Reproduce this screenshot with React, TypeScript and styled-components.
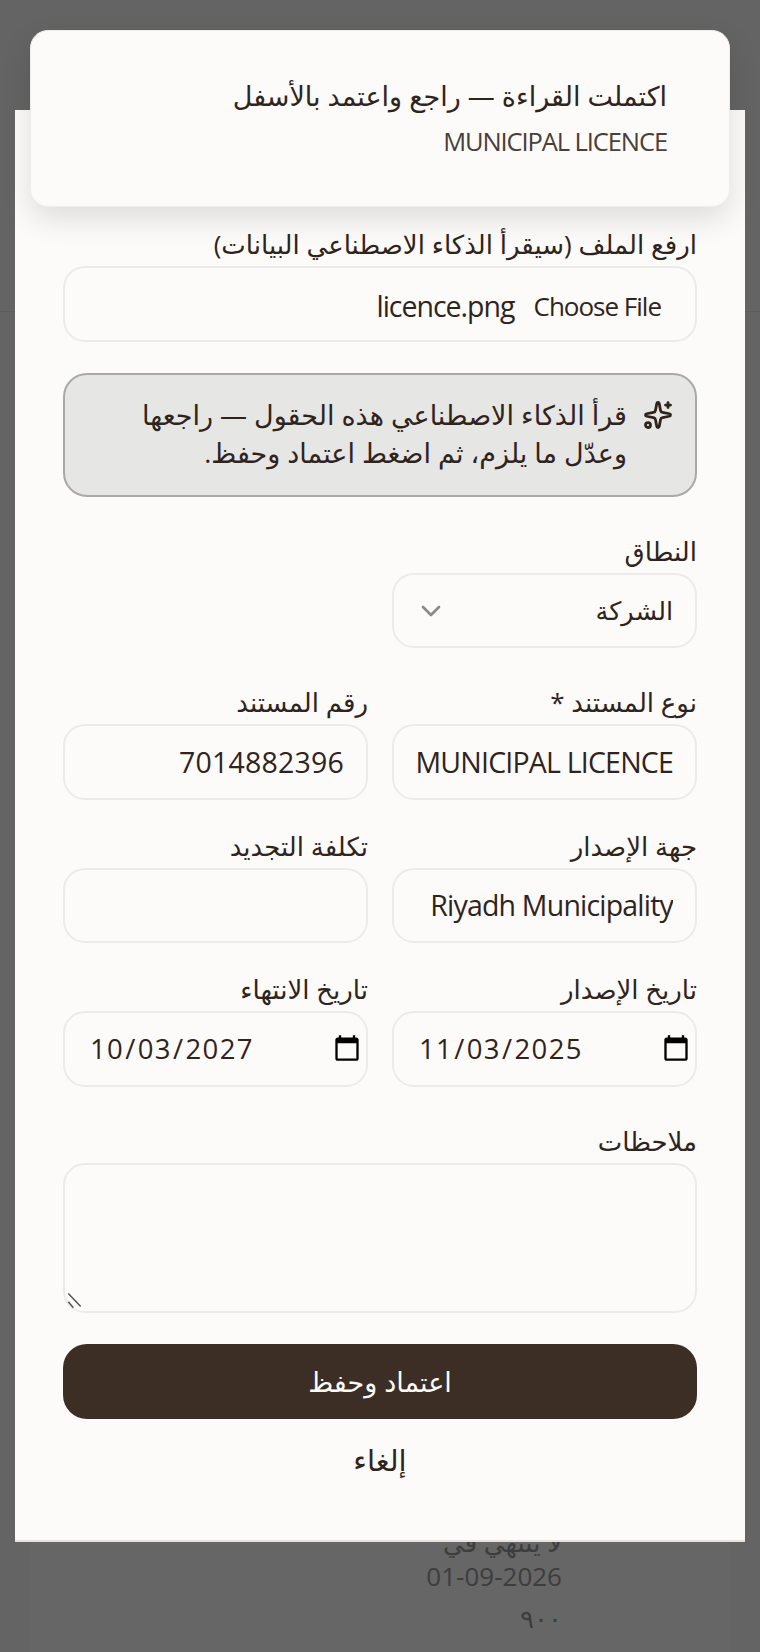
import React from "react";
import styled, { createGlobalStyle } from "styled-components";
import { ChevronDown, Sparkles } from "lucide-react";

const FONT = `"Open Sans", "Noto Sans", "DejaVu Sans", sans-serif`;

const GlobalStyle = createGlobalStyle`
  * { box-sizing: border-box; }
  html, body { margin: 0; padding: 0; }
  body { font-family: ${FONT}; color: #2f241d; overflow: hidden; }
`;

const App: React.FC = () => {
  return (
    <Page dir="rtl">
      <GlobalStyle />
      <BehindHeader />
      <BehindCard>
        <BehindText>
          لا ينتهي في
          <br />
          01-09-2026
        </BehindText>
        <BehindAmount>٩٠٠</BehindAmount>
      </BehindCard>

      <Overlay>
        <Toast>
          <ToastTitle>اكتملت القراءة — راجع واعتمد بالأسفل</ToastTitle>
          <ToastSub>MUNICIPAL LICENCE</ToastSub>
        </Toast>

        <Panel>
          <Field>
            <Label>ارفع الملف (سيقرأ الذكاء الاصطناعي البيانات)</Label>
            <FileBox>
              <ChooseFile>Choose File</ChooseFile>
              <FileName>licence.png</FileName>
            </FileBox>
          </Field>

          <AiNotice>
            <Sparkles size={30} strokeWidth={2.2} />
            <AiText>
              قرأ الذكاء الاصطناعي هذه الحقول — راجعها
              <br />
              وعدّل ما يلزم، ثم اضغط اعتماد وحفظ.
            </AiText>
          </AiNotice>

          <Section>
            <Row>
              <Field>
                <Label>النطاق</Label>
                <SelectWrap>
                  <Select defaultValue="company">
                    <option value="company">الشركة</option>
                  </Select>
                  <Chevron>
                    <ChevronDown size={32} strokeWidth={2} />
                  </Chevron>
                </SelectWrap>
              </Field>
            </Row>
          </Section>

          <Section>
            <Row>
              <Field>
                <Label>نوع المستند *</Label>
                <Input defaultValue="MUNICIPAL LICENCE" />
              </Field>
              <Field>
                <Label>رقم المستند</Label>
                <NumberInput defaultValue="7014882396" />
              </Field>
            </Row>
          </Section>

          <Row>
            <Field>
              <Label>جهة الإصدار</Label>
              <Input defaultValue="Riyadh Municipality" />
            </Field>
            <Field>
              <Label>تكلفة التجديد</Label>
              <Input />
            </Field>
          </Row>

          <Row>
            <Field>
              <Label>تاريخ الإصدار</Label>
              <DateInput type="date" dir="ltr" defaultValue="2025-11-03" />
            </Field>
            <Field>
              <Label>تاريخ الانتهاء</Label>
              <DateInput type="date" dir="ltr" defaultValue="2027-10-03" />
            </Field>
          </Row>

          <Section>
            <Field>
              <Label>ملاحظات</Label>
              <NotesWrap>
                <Notes />
                <ResizeGrip width="16" height="16" viewBox="0 0 16 16">
                  <path d="M1.3.5l12.4 13M1.3 8.8l5 6" />
                </ResizeGrip>
              </NotesWrap>
            </Field>
          </Section>

          <SaveButton type="button">اعتماد وحفظ</SaveButton>
          <CancelButton type="button">إلغاء</CancelButton>
        </Panel>
      </Overlay>
    </Page>
  );
};

const Page = styled.div`
  position: relative;
  width: 760px;
  height: 1652px;
  background: #646464;
  overflow: hidden;
`;

const BehindHeader = styled.div`
  height: 312px;
  border-bottom: 1px solid #5c5c5c;
`;

const BehindCard = styled.div`
  position: absolute;
  top: 1500px;
  left: 31px;
  right: 30px;
  bottom: 0;
  background: #666666;
  padding: 25px 168px 0 0;
`;

const BehindText = styled.div`
  font-size: 26px;
  line-height: 34px;
  letter-spacing: 1.1px;
  color: #3d3d3d;
`;

const BehindAmount = styled(BehindText)`
  margin-top: 8px;
`;

const Overlay = styled.div`
  position: absolute;
  inset: 0;
  display: flex;
  justify-content: center;
  padding-top: 110px;
`;

const Toast = styled.div`
  position: absolute;
  top: 30px;
  left: 30px;
  width: 700px;
  height: 177px;
  padding: 44px 62px 0;
  background: #fcfbf9;
  border: 1px solid #eeede9;
  border-radius: 18px;
  box-shadow: 0 12px 30px rgba(0, 0, 0, 0.12);
  z-index: 2;
`;

const ToastTitle = styled.div`
  font-size: 27px;
  line-height: 42px;
  color: #2f241d;
`;

const ToastSub = styled.div`
  font-size: 25.5px;
  letter-spacing: -1.1px;
  line-height: 48px;
  color: #4a3f38;
`;

const Panel = styled.div`
  width: 730px;
  height: 1432px;
  background: #fcfbf9;
  padding: 119px 48px 0;
  display: flex;
  flex-direction: column;
  gap: 31px;
  border-bottom: 2px solid #e4e3df;
`;

const Section = styled.div`
  margin-top: 8px;
`;

const Row = styled.div`
  display: grid;
  grid-template-columns: 1fr 1fr;
  gap: 24px;
`;

const Field = styled.div`
  display: flex;
  flex-direction: column;
  min-width: 0;
`;

const Label = styled.label`
  font-size: 26px;
  line-height: 31px;
  margin-bottom: 6px;
  color: #2f241d;
  white-space: nowrap;
`;

const Input = styled.input`
  width: 100%;
  height: 75.5px;
  padding: 0 22px;
  font-family: ${FONT};
  font-size: 28.5px;
  letter-spacing: -0.8px;
  color: #2f241d;
  background: #fcfbf9;
  border: 2px solid #ecebe7;
  border-radius: 22px;
  outline: none;
`;

const NumberInput = styled(Input)`
  letter-spacing: 0.2px;
`;

const DateInput = styled(Input)`
  padding: 0 4px 0 24px;
  font-size: 27.5px;
  letter-spacing: 1.4px;
  &::-webkit-calendar-picker-indicator {
    width: 30px;
    height: 30px;
    margin: 0;
    padding: 0;
  }
`;

const FileBox = styled.div`
  height: 75.5px;
  padding: 5px 34px 0;
  display: flex;
  align-items: center;
  gap: 19px;
  border: 2px solid #ecebe7;
  border-radius: 22px;
`;

const ChooseFile = styled.span`
  font-size: 26px;
  letter-spacing: -1px;
`;

const FileName = styled.span`
  font-size: 28.5px;
  letter-spacing: -1px;
`;

const AiNotice = styled.div`
  height: 124px;
  padding: 21px 22px 0 0;
  display: flex;
  align-items: flex-start;
  gap: 16px;
  background: #e6e6e4;
  border: 2px solid #a9a9a5;
  border-radius: 24px;
  color: #2f241d;
  svg {
    flex: none;
    margin-top: 4px;
  }
`;

const AiText = styled.div`
  font-size: 27px;
  line-height: 38px;
  white-space: nowrap;
`;

const SelectWrap = styled.div`
  position: relative;
`;

const Select = styled.select`
  appearance: none;
  width: 100%;
  height: 75.5px;
  padding: 0 22px;
  font-family: ${FONT};
  font-size: 25.5px;
  color: #2f241d;
  background: #fcfbf9;
  border: 2px solid #ecebe7;
  border-radius: 22px;
  outline: none;
`;

const Chevron = styled.span`
  position: absolute;
  left: 23px;
  top: 22px;
  color: #8a8a8a;
  pointer-events: none;
  display: flex;
`;

const NotesWrap = styled.div`
  position: relative;
`;

const Notes = styled.textarea`
  display: block;
  width: 100%;
  height: 150px;
  background: #fcfbf9;
  border: 2px solid #ecebe7;
  border-radius: 22px;
  outline: none;
  resize: none;
`;

const ResizeGrip = styled.svg`
  position: absolute;
  left: 4px;
  bottom: 4px;
  fill: none;
  stroke: #555555;
  stroke-width: 1.5;
  pointer-events: none;
`;

const SaveButton = styled.button`
  height: 75px;
  font-family: ${FONT};
  font-size: 27px;
  color: #fcfbf9;
  background: #3c2e25;
  border: none;
  border-radius: 24px;
`;

const CancelButton = styled.button`
  margin-top: -11px;
  font-family: ${FONT};
  font-size: 29px;
  color: #2f241d;
  background: none;
  border: none;
`;

export default App;
